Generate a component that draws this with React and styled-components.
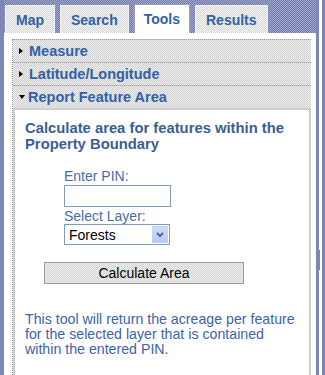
import React from 'react';
import styled, { createGlobalStyle, css } from 'styled-components';

const GlobalStyle = createGlobalStyle`
  body {
    margin: 0;
    font-family: "Liberation Sans", Arial, sans-serif;
    background: #fff;
  }
`;

// 1px checker, like the dithered colours of the old GIF screenshot
const dither = (a, b) => css`
  background-color: ${a};
  background-image: repeating-conic-gradient(${a} 0 25%, ${b} 0 50%);
  background-size: 2px 2px;
`;

const Frame = styled.div`
  display: flex;
  width: 325px;
  height: 375px;
  overflow: hidden;
`;

const Sidebar = styled.div`
  width: 316px;
  box-sizing: border-box;
  border-left: 4px solid #7e86b6;
  display: flex;
  flex-direction: column;
`;

const Splitter = styled.div`
  width: 9px;
  box-sizing: border-box;
  border-left: 3px solid #7e86b6;
  border-right: 3px solid #7e86b6;
  background: #fff;
  display: flex;
  flex-direction: column;
`;

const Grip = styled.div`
  width: 1px;
  height: 20px;
  margin: 250px 0 0 0;
  background: #888;
`;

const TabBar = styled.div`
  ${dither('#6c76aa', '#a6acce')}
  height: 33px;
  flex-shrink: 0;
  display: flex;
  align-items: flex-end;
  gap: 5px;
  padding-left: 1px;
`;

const Tab = styled.div`
  box-sizing: border-box;
  height: ${p => (p.$active ? 29 : 28)}px;
  padding: 0 ${p => (p.$active ? 9 : 10)}px;
  border: 1px solid ${p => (p.$active ? '#a4a4a4' : '#f2f2f2')};
  border-bottom: none;
  ${p => (p.$active ? css`background: #fff;` : dither('#d6d6d6', '#f6f6f6'))}
  display: flex;
  align-items: center;
  font-size: 14px;
  font-weight: bold;
  color: #3062a4;
`;

const Panel = styled.div`
  flex: 1;
  background: #fff;
  padding: 6px 5px 0 8px;
`;

const Accordion = styled.div`
  border-left: 1px dotted #9a9a9a;
  height: 100%;
  display: flex;
  flex-direction: column;
`;

const Header = styled.div`
  ${dither('#cfcfcf', '#efefef')}
  height: 23px;
  box-sizing: border-box;
  border-top: 1px dotted #a0a0a0;
  display: flex;
  align-items: center;
  gap: 3px;
  padding-left: 6px;
  font-size: 14.5px;
  font-weight: bold;
  color: #3062a8;
`;

const Arrow = styled.span`
  width: 0;
  height: 0;
  ${p =>
    p.$open
      ? css`
          border-left: 3.5px solid transparent;
          border-right: 3.5px solid transparent;
          border-top: 4px solid #000;
        `
      : css`
          border-top: 3.5px solid transparent;
          border-bottom: 3.5px solid transparent;
          border-left: 4px solid #000;
          margin-right: 3px;
        `}
`;

const Body = styled.div`
  flex: 1;
  border: 2px solid #cdcdcd;
  border-bottom: none;
  padding: 10px 10px 0 10px;
`;

const Lead = styled.div`
  font-size: 14.8px;
  line-height: 16px;
  font-weight: bold;
  color: #3a5e94;
`;

const Form = styled.div`
  display: flex;
  flex-direction: column;
  align-items: flex-start;
  padding-left: 39px;
  margin-top: 16px;
`;

const Label = styled.div`
  font-size: 14px;
  line-height: 16px;
  color: #4a6ba8;
`;

const TextBox = styled.input`
  box-sizing: border-box;
  width: 107px;
  height: 22px;
  margin: 1px 0 1px;
  border: 1px solid #7f9db9;
  background: #fff;
  padding: 0 3px;
`;

const SelectBox = styled.div`
  box-sizing: border-box;
  width: 106px;
  height: 21px;
  border: 1px solid #7f9db9;
  display: flex;
  align-items: center;
  padding-left: 4px;
  font-size: 14px;
  color: #000;
`;

const SelectValue = styled.span`
  flex: 1;
`;

const DropButton = styled.span`
  width: 16px;
  height: 17px;
  margin-right: 1px;
  background: linear-gradient(#cfdcfb, #b4c8f6);
  border: 1px solid #c4d2f4;
  box-sizing: border-box;
  display: flex;
  align-items: center;
  justify-content: center;
`;

const Button = styled.div`
  ${dither('#d4d4d4', '#f0f0f0')}
  box-sizing: border-box;
  width: 200px;
  height: 22px;
  margin: 17px 0 0 19px;
  border: 1px solid #9c9c9c;
  display: flex;
  align-items: center;
  justify-content: center;
  font-size: 14px;
  color: #000;
`;

const Note = styled.p`
  margin: 28px 0 0;
  font-size: 14.2px;
  line-height: 15px;
  color: #3d63ac;
`;

const tabs = ['Map', 'Search', 'Tools', 'Results'];
const sections = ['Measure', 'Latitude/Longitude'];

export default function App() {
  return (
    <>
      <GlobalStyle />
      <Frame>
        <Sidebar>
          <TabBar>
            {tabs.map(t => (
              <Tab key={t} $active={t === 'Tools'}>{t}</Tab>
            ))}
          </TabBar>
          <Panel>
            <Accordion>
              {sections.map(s => (
                <Header key={s}><Arrow />{s}</Header>
              ))}
              <Header><Arrow $open />Report Feature Area</Header>
              <Body>
                <Lead>Calculate area for features within the Property Boundary</Lead>
                <Form>
                  <Label>Enter PIN:</Label>
                  <TextBox type="text" />
                  <Label>Select Layer:</Label>
                  <SelectBox>
                    <SelectValue>Forests</SelectValue>
                    <DropButton>
                      <svg width="8" height="6" viewBox="0 0 8 6">
                        <path d="M1 1 L4 4 L7 1" fill="none" stroke="#4d5f8f" strokeWidth="1.8" />
                      </svg>
                    </DropButton>
                  </SelectBox>
                </Form>
                <Button>Calculate Area</Button>
                <Note>
                  This tool will return the acreage per feature for the selected layer that is contained
                  within the entered PIN.
                </Note>
              </Body>
            </Accordion>
          </Panel>
        </Sidebar>
        <Splitter><Grip /></Splitter>
      </Frame>
    </>
  );
}
